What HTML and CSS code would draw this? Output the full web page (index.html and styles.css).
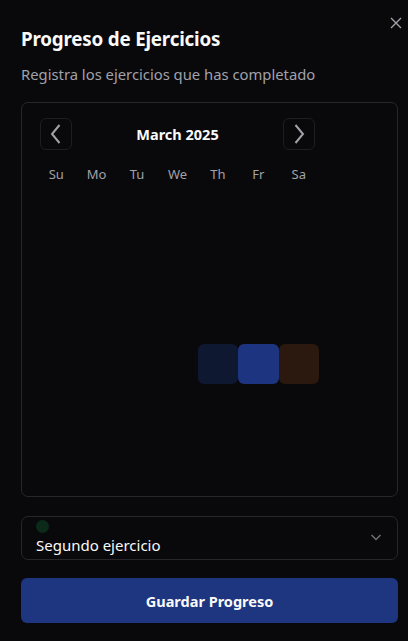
FILE: index.html
```html
<!DOCTYPE html>
<html>
<head>
<meta charset="utf-8">
<link rel="stylesheet" href="styles.css">
</head>
<body>
<div class="dialog">
  <button class="close" aria-label="Close">
    <svg width="12" height="12" viewBox="0 0 12 12"><path d="M1 1L11 11M11 1L1 11" stroke="#a1a1aa" stroke-width="1.4" fill="none"/></svg>
  </button>
  <h2 class="title">Progreso de Ejercicios</h2>
  <p class="subtitle">Registra los ejercicios que has completado</p>

  <div class="calendar">
    <div class="nav">
      <button class="navbtn"><svg width="24" height="24" viewBox="0 0 24 24"><path d="M15.5 3L8 12l7.5 9" stroke="#a1a1aa" stroke-width="2" fill="none"/></svg></button>
      <div class="month">March 2025</div>
      <button class="navbtn"><svg width="24" height="24" viewBox="0 0 24 24"><path d="M8.5 3L16 12l-7.5 9" stroke="#a1a1aa" stroke-width="2" fill="none"/></svg></button>
    </div>
    <div class="grid head">
      <span>Su</span><span>Mo</span><span>Tu</span><span>We</span><span>Th</span><span>Fr</span><span>Sa</span>
    </div>
    <div class="grid days">
      <span></span><span></span><span></span><span></span><span></span><span></span><span class="d">1</span>
      <span class="d">2</span><span class="d">3</span><span class="d">4</span><span class="d">5</span><span class="d">6</span><span class="d">7</span><span class="d">8</span>
      <span class="d">9</span><span class="d">10</span><span class="d">11</span><span class="d">12</span><span class="d">13</span><span class="d">14</span><span class="d">15</span>
      <span class="d">16</span><span class="d">17</span><span class="d">18</span><span class="d">19</span><span class="d">20</span><span class="d">21</span><span class="d">22</span>
      <span class="d">23</span><span class="d">24</span><span class="d">25</span><span class="d">26</span><span class="d c1">27</span><span class="d c2">28</span><span class="d c3">29</span>
      <span class="d">30</span><span class="d">31</span>
    </div>
  </div>

  <div class="select">
    <div class="sel-content">
      <span class="dot"></span>
      <span class="sel-text">Segundo ejercicio</span>
    </div>
    <svg class="chev" width="14" height="14" viewBox="0 0 14 14"><path d="M2.5 5l4.5 4.5L11.5 5" stroke="#71717a" stroke-width="1.4" fill="none"/></svg>
  </div>

  <button class="save">Guardar Progreso</button>
</div>
</body>
</html>
```
FILE: styles.css
```css
* { box-sizing: border-box; }
html, body { margin: 0; padding: 0; background: #09090b; }
body { font-family: "Noto Sans", "Open Sans", sans-serif; color: #fafafa; }
.dialog { position: relative; width: 408px; height: 641px; padding: 25px 10px 0 21px; display: flex; flex-direction: column; }
.close { position: absolute; top: 16px; right: 5px; width: 14px; height: 14px; padding: 0; border: 0; background: none; display: flex; align-items: center; justify-content: center; }
.title { margin: 0; font-size: 18.8px; font-weight: 700; line-height: 28px; letter-spacing: -0.2px; }
.subtitle { margin: 10px 0 0; font-size: 14.8px; line-height: 22px; color: #a1a1aa; }
.calendar { margin-top: 17px; height: 395px; border: 1px solid #27272a; border-radius: 7px; padding: 15px 14px 0 14px; }
.nav { display: flex; align-items: center; width: 283px; padding: 0 4px; }
.navbtn { width: 32px; height: 32px; border: 1px solid #1e1e21; border-radius: 6px; background: transparent; padding: 0; display: flex; align-items: center; justify-content: center; }
.month { flex: 1; text-align: center; font-size: 14.5px; font-weight: 700; }
.grid { display: grid; grid-template-columns: repeat(7, 40.43px); width: 283px; }
.head { margin-top: 15px; height: 19px; }
.head span { text-align: center; font-size: 13px; line-height: 19px; color: #a1a1aa; }
.days span { height: 40px; border-radius: 6px; color: transparent; font-size: 13px; display: flex; align-items: center; justify-content: center; }
.days .c1 { background: #0e1830; }
.days .c2 { background: #1d3480; }
.days .c3 { background: #2b180e; }
.select { margin-top: 19px; height: 44px; border: 1px solid #27272a; border-radius: 7px; padding: 0 14px; display: flex; align-items: center; justify-content: space-between; }
.sel-content { display: flex; flex-direction: column; align-items: flex-start; align-self: stretch; padding-top: 3px; }
.dot { width: 13px; height: 13px; border-radius: 50%; background: #0c2a1a; }
.sel-text { font-size: 15px; line-height: 20px; color: #fafafa; margin-top: 2px; }
.chev { margin-top: -2px; }
.save { margin-top: 18px; height: 45px; border: 0; border-radius: 6px; background: #1e3580; color: #fafafa; font-family: inherit; font-size: 14.5px; font-weight: 700; }
```
